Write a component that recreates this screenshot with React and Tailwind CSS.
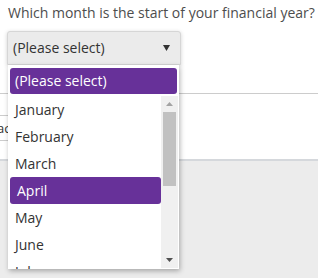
import React from 'react';

const months = ['January', 'February', 'March', 'April', 'May', 'June', 'July'];

function Arrow({ up, color }) {
  return (
    <svg width="7" height="4" viewBox="0 0 7 4" className="block">
      <path d={up ? 'M0 4 L3.5 0 L7 4 Z' : 'M0 0 L7 0 L3.5 4 Z'} fill={color} />
    </svg>
  );
}

export default function App() {
  const selected = 'April';

  return (
    <div className="relative w-[318px] h-[278px] overflow-hidden bg-white font-['Open_Sans',sans-serif] text-[14px] text-[#333]">
      {/* Fondo de la página */}
      <div className="flex flex-col h-full">
        <div className="h-[31px] pl-[8px] pt-[3px] leading-[20px] text-[#4d4d4d] whitespace-nowrap">
          Which month is the start of your financial year?
        </div>
        <div className="ml-[7px] w-[174px] h-[34px] rounded-t-[3px] bg-[#ebebeb] border border-[#d6d6d6] shadow-[0_1px_4px_rgba(0,0,0,0.18)] flex items-center justify-between pl-[5px] pr-[10px]">
          <span className="leading-[20px]">(Please select)</span>
          <svg width="7" height="6" viewBox="0 0 7 6"><path d="M0 0 L7 0 L3.5 6 Z" fill="#333" /></svg>
        </div>
        <div className="h-[29px] border-b border-[#cccccc]" />
        <div className="h-[21px]" />
        <div className="w-[120px] h-[26px] border-y border-[#cccccc] flex items-center -ml-[3px] text-[13px] leading-none">
          ac
        </div>
        <div className="h-[20px] border-b-2 border-[#d5d8dc]" />
        <div className="flex-1 bg-[#ececec]" />
      </div>

      {/* Lista desplegable */}
      <div className="absolute left-[8px] top-[65px] w-[171px] h-[204px] bg-white shadow-[1px_2px_5px_rgba(0,0,0,0.3)] pt-[3px] flex flex-col">
        <div className="mx-[2px] h-[26px] rounded-[3px] bg-[#673199] text-white pl-[5px] flex items-center leading-[20px]">
          (Please select)
        </div>
        <div className="mt-[2px] flex flex-1 min-h-0">
          <div className="flex-1 overflow-hidden">
            {months.map((m) => (
              <div
                key={m}
                className={`h-[27px] flex items-center pl-[7px] leading-[20px] ${m === selected ? 'ml-[2px] pl-[5px] rounded-[3px] bg-[#673199] text-white' : ''}`}
              >
                {m}
              </div>
            ))}
          </div>
          <div className="w-[17px] h-[172px] mr-[1px] bg-[#f0f0f0] flex flex-col items-center">
            <div className="h-[16px] flex items-center justify-center"><Arrow up color="#a3a3a3" /></div>
            <div className="w-[13px] h-[74px] bg-[#c1c1c1]" />
            <div className="flex-1" />
            <div className="h-[16px] flex items-center justify-center"><Arrow color="#505050" /></div>
          </div>
        </div>
      </div>
    </div>
  );
}
